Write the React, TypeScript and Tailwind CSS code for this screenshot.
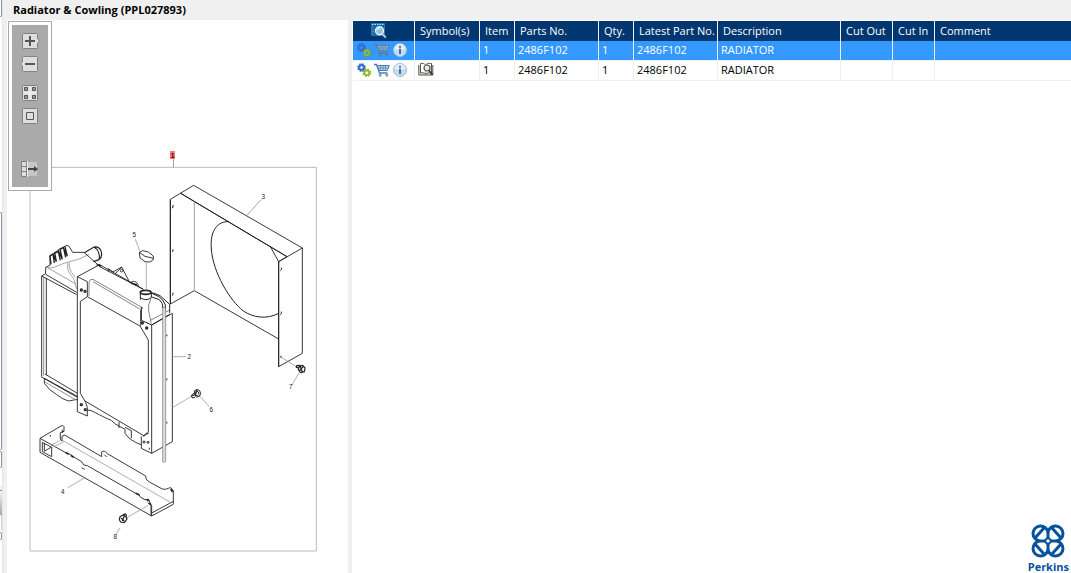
import type { ReactNode } from 'react';

interface Part {
  id: number;
  symbol: boolean;
  item: string;
  partNo: string;
  qty: string;
  latestPartNo: string;
  description: string;
  selected: boolean;
}

const parts: Part[] = [
  { id: 1, symbol: false, item: '1', partNo: '2486F102', qty: '1', latestPartNo: '2486F102', description: 'RADIATOR', selected: true },
  { id: 2, symbol: true, item: '1', partNo: '2486F102', qty: '1', latestPartNo: '2486F102', description: 'RADIATOR', selected: false },
];

const headers = ['Symbol(s)', 'Item', 'Parts No.', 'Qty.', 'Latest Part No.', 'Description', 'Cut Out', 'Cut In', 'Comment'];

function GearsIcon() {
  return (
    <svg width="14" height="14" viewBox="0 0 14 14" fill="none">
      <circle cx="4.5" cy="4.5" r="3.4" stroke="#2457bd" strokeWidth="1.8" strokeDasharray="1.6 1.07" />
      <circle cx="4.5" cy="4.5" r="2.3" stroke="#3d6fd2" strokeWidth="2.2" />
      <circle cx="9.8" cy="9.8" r="3.3" stroke="#769f10" strokeWidth="1.8" strokeDasharray="1.5 1.1" />
      <circle cx="9.8" cy="9.8" r="2.3" stroke="#95bd22" strokeWidth="1.8" />
    </svg>
  );
}

function CartIcon({ dim }: { dim: boolean }) {
  return (
    <svg width="16" height="14" viewBox="0 0 16 14" fill="none" stroke={dim ? '#5e7c9c' : '#4a7cab'}>
      <path d="M0 1.5h2.5l3 8.5h8" strokeWidth="1.3" />
      <path d="M3 2.5h12.3l-2 5H5z" fill={dim ? '#8eb4db' : '#c3d8ea'} />
      <path d="M3.7 5h10.6M6.5 3v4.5M9 3v4.5M11.5 3v4.5" strokeWidth=".7" />
      <circle cx="6.2" cy="12.2" r="1" />
      <circle cx="12.8" cy="12.2" r="1" />
    </svg>
  );
}

function InfoIcon() {
  return (
    <svg width="14" height="14" viewBox="0 0 14 14">
      <circle cx="7" cy="7" r="6.5" fill="#c4dbed" stroke="#9fbdd4" />
      <path d="M1.5 6a5.5 5 0 0 1 11 0c-4 1.5-7 1.5-11 0z" fill="#e2eff8" />
      <path d="M6 3h2v1.7H6zM6 5.8h2V11H6z" fill="#416f9b" />
    </svg>
  );
}

function PreviewIcon() {
  return (
    <svg width="17" height="16" viewBox="0 0 17 16" fill="none">
      <path d="M.5.5h13v12H.5z" fill="#1267a3" stroke="#1a79b8" />
      <path d="M1 1.5h12" stroke="#bfe3f5" strokeDasharray="1.5 1" />
      <path d="M2 4v8" stroke="#6fb3d8" strokeDasharray="1 1" />
      <circle cx="8.5" cy="7.7" r="4" fill="#8fc3dc" stroke="#e8f1f6" strokeWidth="1.4" />
      <path d="M6.5 7a2.5 2.5 0 0 1 2-2" stroke="#fff" />
      <path d="m11.5 11 3.3 3.6" stroke="#b9cbd8" strokeWidth="2" />
    </svg>
  );
}

function BookIcon() {
  return (
    <svg width="16" height="15" viewBox="0 0 16 15" fill="none" stroke="#55554c">
      <path d="M.8 3v10h14V3" fill="#e9e9e2" />
      <path d="M2.5 11V1.5C4.5 1 6 1.5 7.5 3v9C6 10.8 4.5 10.5 2.5 11z" fill="#fff" />
      <path d="M7.5 3C9 1.5 11 1 13.5 1.5V11c-2.5-.5-4.5 0-6 1" fill="#fff" />
      <circle cx="9" cy="6" r="3" fill="#e5e9e9" strokeWidth="1.2" />
      <path d="m11 8.500 3.500 4.500" stroke="#383830" strokeWidth="1.8" />
    </svg>
  );
}

function ToolButton({ label, pointer, className = '', children }: { label: string; pointer?: 'left' | 'right'; className?: string; children: ReactNode }) {
  return (
    <button type="button" aria-label={label} className={`block ${className}`}>
      <svg width="20" height="16" viewBox="0 0 20 16" fill="none">
        {pointer === 'right' && <path d="m17 5 2.5 3-2.5 3" fill="#ddd" stroke="#808080" />}
        {pointer === 'left' && <path d="M3 5 .5 8 3 11" fill="#ddd" stroke="#808080" />}
        {children}
      </svg>
    </button>
  );
}

function Tile() {
  return <rect x="2.5" y=".5" width="15" height="15" rx="1" fill="#dedede" stroke="#808080" />;
}

function Toolbar() {
  return (
    <div className="absolute left-px top-px border border-[#aaa] bg-white p-[3px]">
      <div className="flex h-[162px] w-9 flex-col items-center bg-[#aaa] pt-2">
        <ToolButton label="Zoom in" pointer="right">
          <Tile />
          <path d="M10 3v10M5 8h10" stroke="#555" strokeWidth="2" />
          <path d="M17.5 6v4" stroke="#ddd" />
        </ToolButton>
        <ToolButton label="Zoom out" pointer="left" className="mt-[7px]">
          <Tile />
          <path d="M5 8h10" stroke="#555" strokeWidth="2" />
          <path d="M2.5 6v4" stroke="#ddd" />
        </ToolButton>
        <ToolButton label="Fit to window" className="mt-[13px]">
          <Tile />
          <path d="M4.5 2.5h3v3h-3zM12.5 2.5h3v3h-3zM4.5 10.5h3v3h-3zM12.5 10.5h3v3h-3z" fill="#999" stroke="#555" />
          <path d="M10 2v12M4 8h12" stroke="#f7f7f7" />
        </ToolButton>
        <ToolButton label="Actual size" className="mt-[7px]">
          <Tile />
          <path d="M6.5 4.5h7v7h-7z" stroke="#555" />
        </ToolButton>
        <ToolButton label="Toggle parts list" className="mt-[37px]">
          <path d="M7 1h10v14H7z" fill="#c6c6c6" />
          <path d="M1.5 .5h5v15h-5zM1.5 5.5h5M1.5 10.5h5" fill="#dedede" stroke="#808080" />
          <path d="M7.5 0v16" stroke="#f0f0f0" />
          <path d="M8 8h7" stroke="#444" strokeWidth="2" />
          <path d="m14 5 4 3-4 3z" fill="#444" />
        </ToolButton>
      </div>
    </div>
  );
}

function Callout({ x, y, children }: { x: number; y: number; children: string }) {
  return (
    <text x={x} y={y} fontSize="19" textAnchor="middle" fill="#222" stroke="none" className="font-['Liberation_Sans']">
      {children}
    </text>
  );
}

// Drawn at three units to the pixel
function RadiatorDrawing() {
  return (
    <svg width="341" height="553" viewBox="21 60 1023 1659" fill="none" stroke="#222" strokeWidth="2.7" role="img" aria-label="Radiator and cowling exploded view">
      <path d="M90 502H949V1653H90z" stroke="#bbb" strokeWidth="3" />
      <path d="M520.5 478v24" stroke="#999" />
      <rect x="510" y="453" width="15" height="24" fill="#ff7474" stroke="none" />
      <text x="518" y="473" fontSize="20" fontWeight="bold" textAnchor="middle" fill="#400" stroke="none" className="font-['Liberation_Sans']">1</text>

      {/* cowling */}
      <g transform="translate(450 435)">
        <path d="M61 163 131 121 457 309V625L386 665V350L411 335 92 145M61 163V477L133 437 386 582M386 350 457 309M360 303 386 350" />
        <path d="M92 145 411 335M61 163V477M386 350V665" strokeWidth="3" />
        <path d="M133 170V437" stroke="#999" />
        <path d="M237 230C205 228 179 254 184 312C189 383 240 467 280 498C310 518 350 524 386 505" strokeWidth="3" />
        <path d="M69 180v7l-3 2M69 313v5l-3 2M69 443v6l-3 2M394 368v6l-3 3M394 500v6l-3 3M393 632v7" strokeWidth="3" />
        <path d="M291 211 333 164" stroke="#777" strokeWidth="2" />
        <Callout x={340} y={161}>3</Callout>
      </g>

      {/* radiator core, tanks and filler neck */}
      <g transform="translate(75 675)">
        <path d="M50 153V454M64 159V450M157 155V560L187 573V548L182 532 166 505V229L187 215V170L157 155 222 120M187 215 345 303 370 345V620L355 633M380 300V685L442 650V265L380 300" />
        <path d="M56 157V452" stroke="#888" />
        <path d="M50 153 62 146V127L75 121V91L98 82 100 74 126 61 133 65 143 82H177L222 122M222 118 355 193M62 148 155 202M50 153 155 209" />
        <path d="M78 118 75 93 84 87 94 110 89 83 100 78 112 103 105 73 115 68 127 94 120 65M84 88 88 114M100 80 106 106M116 70 122 97" strokeWidth="4" />
        <path d="M178 83 207 66C229 62 237 92 222 104L205 110M207 66C221 73 225 91 222 104" strokeWidth="3.5" />
        <path d="M62 127C82 134 101 120 120 114L165 101 192 88M128 114C124 147 145 150 149 170L155 192M133 112C131 134 141 143 150 157M69 129 151 176" stroke="#777" strokeWidth="2" />
        <path d="M192 213V172Q195 160 204 163L352 248M204 170 344 252" stroke="#777" />
        <path d="M352 248 347 257V302M355 193 222 124M250 139V131L264 141 290 126 315 174M270 147 290 126M318 172C327 164 341 174 341 186" />
        <circle cx="290" cy="137" r="4" />
        <path d="M215 119 229 123M318 174 336 180" strokeWidth="5" />
        <ellipse cx="362" cy="202" rx="16" ry="6" strokeWidth="5" />
        <path d="M346 202V218Q363 230 379 218V202M346 218V224M379 204 402 215Q416 224 421 240V258M382 203 405 212 434 238V264M380 216 403 224Q414 232 414 251M349 246V286L380 300 434 268" strokeWidth="3" />
        <path d="M378 220Q367 241 371 258L379 296M376 286 432 256" stroke="#777" />
        <path d="M343 82L353 77 370 81 385 93V104L375 111 360 110 345 99 343 82L360 94 385 100" />
        <path d="M364 113V197M331 43 344 77" stroke="#888" strokeWidth="2" />
        <path d="M413 250Q417 243 422 250V710Q418 715 413 710z" fill="#ddd" stroke="#777" strokeWidth="2" />
        <path d="M424 331h3M424 463h3M424 593h3" strokeWidth="5" />
        <path d="M442 395H483M442 548 501 513" stroke="#888" strokeWidth="2" />
        <circle cx="169" cy="195" r="3" strokeWidth="4" />
        <circle cx="180" cy="199" r="3" strokeWidth="4" />
        <circle cx="352" cy="294" r="3" strokeWidth="4" />
        <circle cx="365" cy="309" r="3" strokeWidth="4" />
        <Callout x={328} y={36}>5</Callout>
        <Callout x={493} y={402}>2</Callout>
      </g>

      {/* lower edge of the radiator */}
      <g transform="translate(75 990)">
        <path d="M48 140 157 202M60 132 157 190M60 146 157 199M58 145V160Q72 181 94 193 112 208 130 213L157 208M180 213 358 318M188 240Q199 240 211 248 236 261 247 266 260 269 271 282L300 298V310Q314 332 348 344M300 292 319 302V325M349 319V355L380 370M282 276V294M355 318 372 309" />
        <path d="M60 156 155 211" stroke="#888" />
        <circle cx="169" cy="224" r="3" strokeWidth="4" />
        <circle cx="181" cy="239" r="3" strokeWidth="4" />
        <circle cx="357" cy="336" r="3" strokeWidth="3" />
        <circle cx="369" cy="337" r="3" strokeWidth="3" />
        <path d="M373 353v6" />
      </g>

      {/* lower bracket */}
      <g transform="translate(75 1245)">
        <path d="M45 70V112L380 303 445 268V228Q439 214 430 220 421 225 412 222L373 201Q360 194 362 183L247 116Q237 104 230 111V125L119 60 111 64V78L106 72V53L117 49V35Q115 29 108 33L45 70 124 114Q137 116 145 125L170 140 176 150 187 152 330 234Q343 235 347 247L360 254 371 253 380 274V303M380 294 445 259" />
        <path d="M52 82 80 97V125L52 110zM57 109 80 96M58 84V108M368 263 378 271V303" />
        <path d="M112 76 438 263M78 91 106 76M86 96 117 80" stroke="#888" strokeWidth="2" />
        <path d="M122 112 131 118M137 121 146 127M332 235 343 240M365 253 371 258M373 264 377 269M437 223 443 231" strokeWidth="5" />
        <path d="M76 60v5M112 44v10M238 119l7 7M170 158l9 5" />
        <path d="M127 219 178 189M302 310 370 271M285 339 273 359" stroke="#888" strokeWidth="2" />
        <path d="m285 305 10-5 8 5 3 7-8 11-11-2-4-7zM294 299l8-2 3 6M288 309l10 9M298 303l-6 15" strokeWidth="3.5" />
        <Callout x={113} y={236}>4</Callout>
        <Callout x={271} y={371}>8</Callout>
      </g>

      {/* screws 6 and 7 */}
      <g transform="translate(450 870)">
        <path d="M393 202 442 231M448 247 426 285M148 317 178 350" stroke="#888" strokeWidth="2" />
        <path d="m448 229 10-3 7 8-2 11-11 3-7-9zM440 227l9-1-3 8-7-2zM451 230l6 15M460 229l-11 13" strokeWidth="3.5" />
        <path d="M133 303 141 298 149 302 152 311 148 319 140 321 133 315zM138 302 145 306 147 314M133 315 125 318M135 322 127 324 124 316 133 309M137 304 137 316 146 319M141 299 136 318" strokeWidth="3" />
        <Callout x={422} y={298}>7</Callout>
        <Callout x={184} y={365}>6</Callout>
      </g>
    </svg>
  );
}

function PerkinsLogo() {
  return (
    <div className="absolute bottom-0 right-0 flex flex-col items-center pr-0.5 text-[#07529d]">
      <svg width="34" height="34" viewBox="0 0 34 34" fill="none" stroke="currentColor" strokeWidth="3">
        <path d="M17 17H9a7.500 7.500 0 1 1 8-8zM17 17h8a7.500 7.500 0 1 0-8-8zM17 17H9a7.500 7.500 0 1 0 8 8zM17 17h8a7.500 7.500 0 1 1-8 8z" />
        <path d="m4 14 9-10M21 4l9 10M4 20l9 10M30 20l-9 10" />
        <path d="M17 13.500 20.500 17 17 20.500 13.500 17z" fill="#fff" strokeWidth="2" />
      </svg>
      <span className="mt-0.5 font-['Open_Sans'] text-[11px]/[13px] font-bold">Perkins</span>
    </div>
  );
}

// Right-hand edge of the neighbouring navigation frame
function NavigationEdge() {
  return (
    <div className="flex w-[3px] shrink-0 flex-col border-r border-[#e4e5f2] bg-white" aria-hidden="true">
      <div className="h-[17px] rounded-br-sm border-b border-r border-[#8d8f9a]" />
      <div className="mt-[195px] h-[238px] rounded-r-sm border-y border-r border-[#8d8f9a]" />
      <div className="mt-px h-[17px] rounded-r-sm border-y border-r border-[#8d8f9a]" />
      <div className="mt-[18px] h-1 bg-[#eee]" />
      <div className="h-[25px] border-t border-[#999] bg-linear-to-b from-[#f3f3f3] to-[#aaa]" />
      <div className="h-[15px] border-r border-[#cfd5b8]" />
      <div className="mt-0.5 h-2 rounded-r-sm border-y border-r border-[#8d8f9a]" />
    </div>
  );
}

function PartsTable() {
  return (
    <table className="w-full table-fixed border-separate border-spacing-0 text-left">
      <colgroup>
        <col className="w-[62px]" />
        <col className="w-[65px]" />
        <col className="w-[35px]" />
        <col className="w-[84px]" />
        <col className="w-[35px]" />
        <col className="w-[84px]" />
        <col className="w-[123px]" />
        <col className="w-[52px]" />
        <col className="w-[42px]" />
        <col />
      </colgroup>
      <thead>
        <tr className="h-5 bg-[#003770] text-white">
          <th className="border-r border-[#f0f0f0] p-0" aria-label="Preview">
            <div className="flex justify-center pr-2">
              <PreviewIcon />
            </div>
          </th>
          {headers.map((header) => (
            <th key={header} className="whitespace-nowrap border-r border-[#f0f0f0] py-0 pl-[5px] font-normal last:border-r-0">
              {header}
            </th>
          ))}
        </tr>
      </thead>
      <tbody>
        {parts.map((part) => (
          <tr
            key={part.id}
            className={`h-5 leading-4 *:border-b *:border-r *:border-[#f0f0f0] *:pt-0 *:pb-0.5 *:pl-[3px] *:last:border-r-0 ${part.selected ? 'bg-[#3399ff] text-white' : 'bg-white text-black'}`}
          >
            <td>
              <div className="flex items-center gap-[3px] pl-px">
                <button type="button" aria-label="Related parts"><GearsIcon /></button>
                <button type="button" aria-label="Add to cart"><CartIcon dim={part.selected} /></button>
                <button type="button" aria-label="Part information"><InfoIcon /></button>
              </div>
            </td>
            <td>{part.symbol && <BookIcon />}</td>
            <td>{part.item}</td>
            <td>{part.partNo}</td>
            <td>{part.qty}</td>
            <td>{part.latestPartNo}</td>
            <td>{part.description}</td>
            <td />
            <td />
            <td />
          </tr>
        ))}
      </tbody>
    </table>
  );
}

export default function App() {
  return (
    <div className="flex min-h-screen bg-[#f0f0f0] font-['Open_Sans',sans-serif] text-[11px]/[18px] text-black [&_svg]:block">
      <NavigationEdge />
      <div className="flex min-w-0 flex-1 flex-col pl-1">
        <h1 className="h-5 pl-1.5 text-[11px]/5 font-bold">Radiator &amp; Cowling (PPL027893)</h1>
        <main className="flex flex-1 gap-1">
          <section className="relative shrink-0 bg-white">
            <RadiatorDrawing />
            <Toolbar />
          </section>
          <section className="relative min-w-0 flex-1 bg-white pl-px pt-px">
            <PartsTable />
            <PerkinsLogo />
          </section>
        </main>
      </div>
    </div>
  );
}
